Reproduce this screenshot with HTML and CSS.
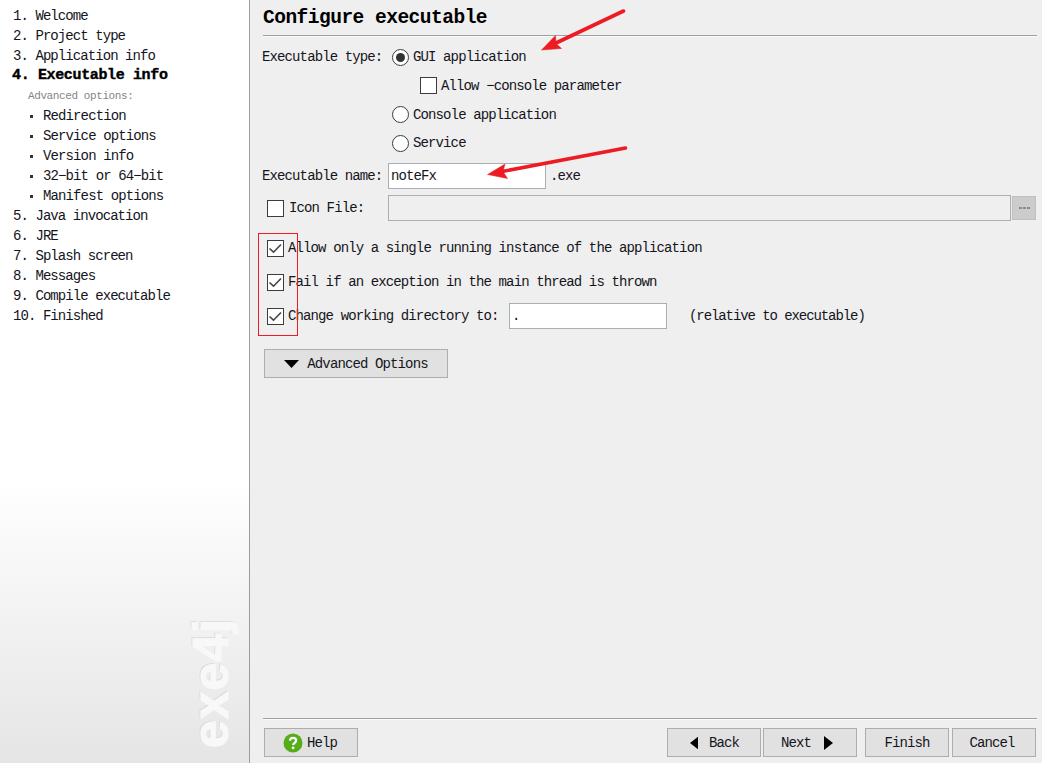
FILE: index.html
```html
<!DOCTYPE html>
<html lang="en">
<head>
<meta charset="utf-8">
<title>exe4j</title>
<link rel="stylesheet" href="styles.css">
</head>
<body>
<div class="window">
  <aside class="sidebar">
    <div class="step">1. Welcome</div>
    <div class="step">2. Project type</div>
    <div class="step">3. Application info</div>
    <div class="step current">4. Executable info</div>
    <div class="step caption">Advanced options:</div>
    <div class="step sub">Redirection</div>
    <div class="step sub">Service options</div>
    <div class="step sub">Version info</div>
    <div class="step sub">32−bit or 64−bit</div>
    <div class="step sub">Manifest options</div>
    <div class="step">5. Java invocation</div>
    <div class="step">6. JRE</div>
    <div class="step">7. Splash screen</div>
    <div class="step">8. Messages</div>
    <div class="step">9. Compile executable</div>
    <div class="step">10. Finished</div>
    <svg class="brand" width="74" height="150" viewBox="0 0 74 150">
      <g transform="translate(53 140) rotate(-90)">
        <text class="brand-shade" x="1" y="-1" textLength="129">exe4j</text>
        <text class="brand-text" x="0" y="0" textLength="129">exe4j</text>
      </g>
    </svg>
  </aside>

  <main class="main">
    <h1 class="title">Configure executable</h1>

    <div class="types">
      <span class="label type-label">Executable type:</span>
      <div class="options">
        <div class="option"><span class="radio on"></span>GUI application</div>
        <div class="option nested"><span class="check"></span>Allow −console parameter</div>
        <div class="option"><span class="radio"></span>Console application</div>
        <div class="option"><span class="radio"></span>Service</div>
      </div>
    </div>

    <div class="row name-row">
      <span class="label name-label">Executable name:</span>
      <span class="field short">noteFx</span>
      <span class="suffix">.exe</span>
    </div>
    <div class="row icon-row">
      <span class="label icon-label"><span class="check"></span>Icon File:</span>
      <span class="field wide"></span>
      <span class="browse"><i></i><i></i><i></i></span>
    </div>

    <div class="row toggle first"><span class="check"><svg width="15" height="15" viewBox="0 0 15 15"><path d="M1.5 7.5 5.5 11.2 13 3.5"/></svg></span>Allow only a single running instance of the application</div>
    <div class="row toggle"><span class="check"><svg width="15" height="15" viewBox="0 0 15 15"><path d="M1.5 7.5 5.5 11.2 13 3.5"/></svg></span>Fail if an exception in the main thread is thrown</div>
    <div class="row toggle last"><span class="check"><svg width="15" height="15" viewBox="0 0 15 15"><path d="M1.5 7.5 5.5 11.2 13 3.5"/></svg></span><span class="dir-label">Change working directory to:</span><span class="field short">.</span><span class="note">(relative to executable)</span></div>

    <div class="button advanced"><svg width="15" height="8" viewBox="0 0 15 8"><path d="M0 0h15L7.5 8z"/></svg>Advanced Options</div>

    <footer class="footer">
      <div class="button help">
        <svg width="20" height="20" viewBox="0 0 20 20"><circle cx="10" cy="10" r="9.5" fill="#55ad17"/><path d="M6.9 7.6C7 5.8 8.3 4.9 10 4.9s3.1 1 3.1 2.6c0 2.3-2.9 2.3-2.9 4.6" fill="none" stroke="#fff" stroke-width="2.3"/><circle cx="10.1" cy="14.8" r="1.4" fill="#fff"/></svg>Help
      </div>
      <div class="button back"><svg width="8" height="14" viewBox="0 0 9 14"><path d="M9 0v14L0 7z"/></svg>Back</div>
      <div class="button next">Next<svg width="9" height="14" viewBox="0 0 9 14"><path d="M0 0v14l9-7z"/></svg></div>
      <div class="button finish">Finish</div>
      <div class="button cancel">Cancel</div>
    </footer>
  </main>

  <svg class="markup" width="1042" height="763" viewBox="0 0 1042 763">
    <rect x="258.5" y="233.5" width="39" height="102"/>
    <path class="shaft" d="M623.5 11 555 43.5M625.5 148 502 171.5"/>
    <path class="head" d="M541.5 50 555.5 35.5 556 43.5 561.5 48.5zM487.500 174.500 505 164 503 171.500 507.500 178.500z"/>
  </svg>
</div>
</body>
</html>
```

FILE: styles.css
```css
* { box-sizing: border-box; }

body {
  margin: 0;
  font-family: "Liberation Mono", monospace;
  font-size: 14px;
  letter-spacing: -0.88px;
  color: #15151c;
}

.window {
  position: relative;
  display: flex;
  width: 1042px;
  height: 763px;
  overflow: hidden;
  background: #efefef;
}

/* Step list */
.sidebar {
  position: relative;
  width: 250px;
  padding: 6px 0 0 13px;
  border-right: 1px solid #9c9c9c;
  background: linear-gradient(#fff 0, #fff 480px, #e5e5e5 763px);
}

.step {
  height: 20px;
  line-height: 20px;
  letter-spacing: -0.93px;
  white-space: pre;
}

.current {
  margin-left: -1px;
  font-size: 15px;
  font-weight: bold;
  letter-spacing: -0.36px;
  color: #000;
  -webkit-text-stroke: 0.4px #000;
}

.caption {
  padding-left: 15px;
  font-size: 11px;
  letter-spacing: -0.4px;
  color: #858585;
}

.sub {
  display: flex;
  align-items: center;
  padding-left: 17px;
  letter-spacing: -0.88px;
}

.sub::before {
  content: "";
  width: 3px;
  height: 3px;
  margin: 1px 10px 0 0;
  background: #333;
}

.brand {
  position: absolute;
  left: 175px;
  top: 608px;
  overflow: visible;
}

.brand text {
  font-family: "Liberation Sans", sans-serif;
  font-size: 50px;
  font-weight: bold;
  letter-spacing: 0;
}

.brand-shade { fill: #dcdcdc; stroke: #dcdcdc; }
.brand-text { fill: #f8f8f8; stroke: #f8f8f8; stroke-width: 1.2; }

/* Form */
.main {
  display: flex;
  flex-direction: column;
  flex: 1;
  padding: 0 5px 0 13px;
  white-space: nowrap;
}

.title {
  height: 36px;
  margin: 0;
  border-bottom: 1px solid #a0a0a0;
  box-shadow: 0 1px #fafafa;
  font-size: 19.5px;
  line-height: 36px;
  letter-spacing: -0.5px;
  color: #000;
}

.types {
  display: flex;
  margin-top: 7px;
}

.label { width: 125px; }
.type-label { width: 130px; margin-left: -1px; line-height: 28px; }
.name-label { width: 126px; margin-left: -1px; }

.option {
  display: flex;
  align-items: center;
  height: 29px;
}

.option:first-child, .option:last-child { height: 28px; }
.option .radio { margin-right: 4px; }
.nested { padding-left: 28px; }
.nested .check { margin-right: 4px; }

.radio, .check {
  display: flex;
  align-items: center;
  justify-content: center;
  flex: none;
  width: 17px;
  height: 17px;
  border: 1px solid #3c3c3c;
  background: #fff;
}

.radio { border-radius: 50%; }

.on::before {
  content: "";
  width: 9px;
  height: 9px;
  border-radius: 50%;
  background: #333;
}

.check path {
  fill: none;
  stroke: #444;
  stroke-width: 1.6;
}

.row {
  display: flex;
  align-items: center;
  height: 26px;
  margin-top: 6px;
}

.field {
  height: 26px;
  padding-left: 2px;
  border: 1px solid #abadb3;
  line-height: 24px;
  background: #fff;
}

.short { width: 158px; }
.wide { width: 623px; background: #efefef; }
.suffix { margin-left: 4px; }

.icon-label { display: flex; align-items: center; padding-left: 4px; }
.icon-label .check { margin-right: 5px; }

.browse {
  display: flex;
  align-items: center;
  justify-content: center;
  gap: 1px;
  width: 24px;
  height: 24px;
  margin-left: 1px;
  border: 1px solid #bfbfbf;
  background: #ccc;
}

.browse i { width: 3px; height: 2px; background: #8b8b8b; }

.toggle { height: 28px; padding-left: 4px; }
.toggle .check { margin-right: 4px; }
.first { margin-top: 13px; }
.last { height: 26px; margin-top: 7px; }
.dir-label { width: 221px; }
.note { margin-left: 22px; letter-spacing: -1.08px; }

/* Buttons */
.button {
  display: flex;
  align-items: center;
  justify-content: center;
  height: 29px;
  border: 1px solid #adadad;
  background: #e1e1e1;
}

.advanced { width: 184px; margin: 20px 0 0 1px; gap: 8px; }

.footer {
  display: flex;
  margin-top: auto;
  padding: 9px 1px 6px;
  border-top: 1px solid #a0a0a0;
  box-shadow: inset 0 1px #fafafa;
}

.help { width: 94px; padding-right: 2px; gap: 4px; }
.back { width: 94px; margin-left: auto; padding-left: 1px; gap: 11px; }
.next { width: 94px; margin-left: 2px; padding-right: 6px; gap: 13px; }
.finish { width: 84px; margin-left: 8px; }
.cancel { width: 84px; margin-left: 3px; padding-right: 4px; }

/* Red callouts over the form */
.markup {
  position: absolute;
  left: 0;
  top: 0;
}

.markup rect { fill: none; stroke: #ed1c24; }
.shaft { fill: none; stroke: #ed1c24; stroke-width: 3.6; stroke-linecap: round; }
.head { fill: #ed1c24; stroke: #ed1c24; stroke-width: 0.5; }
```
